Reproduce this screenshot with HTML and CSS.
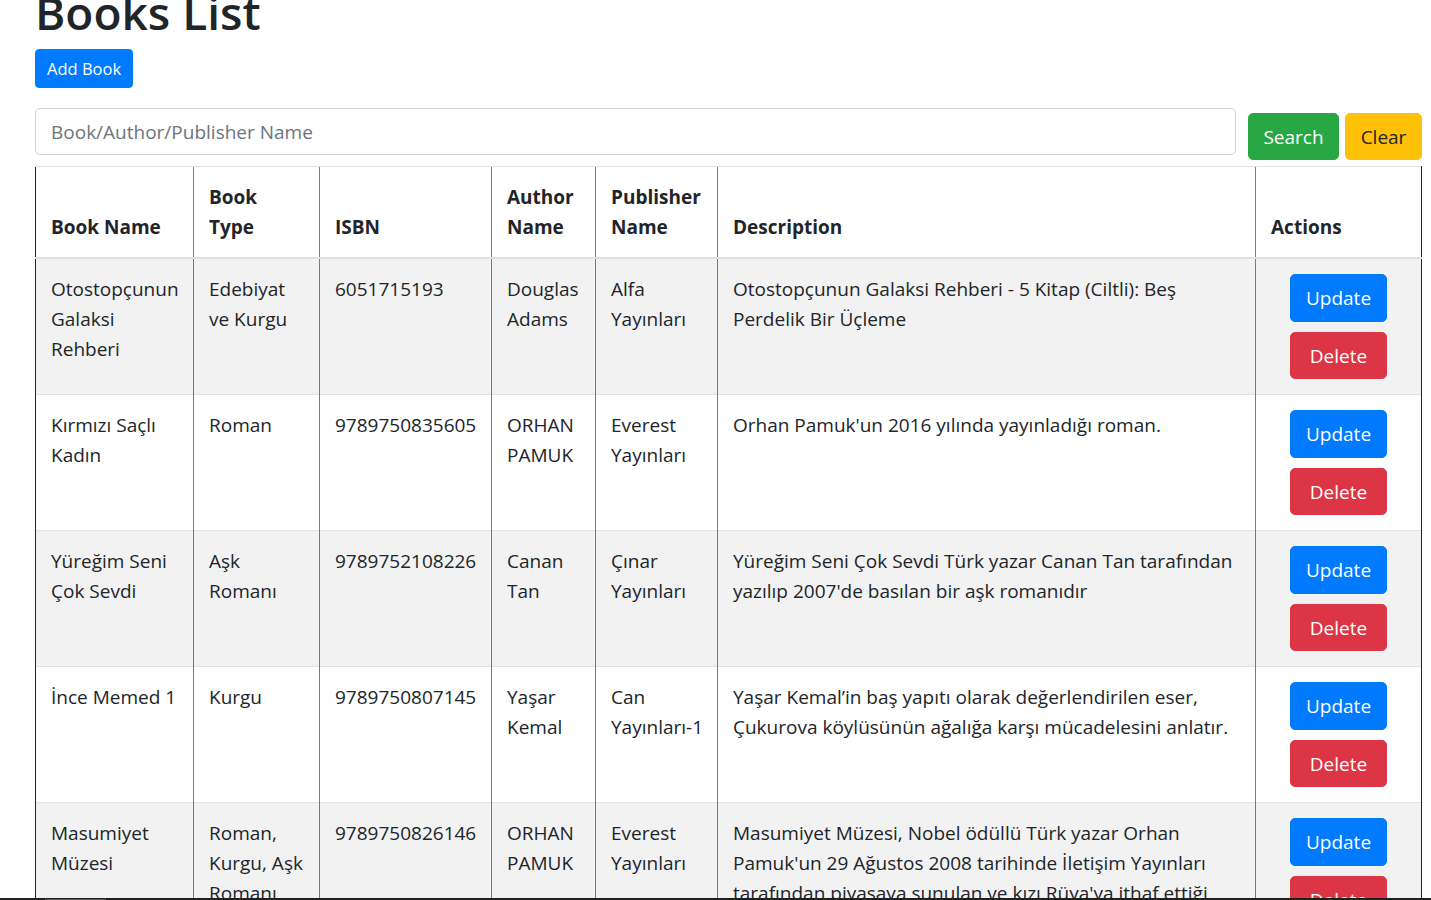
FILE: index.html
```html
<!DOCTYPE html>
<html lang="tr">
<head>
<meta charset="utf-8">
<title>Books List</title>
<link rel="stylesheet" href="styles.css">
</head>
<body>
<div class="page">
  <h1 class="title">Books List</h1>
  <div class="add-row">
    <button class="btn btn-sm btn-primary">Add Book</button>
  </div>
  <div class="search-row">
    <input class="search-input" type="text" placeholder="Book/Author/Publisher Name">
    <button class="btn btn-success btn-search">Search</button>
    <button class="btn btn-warning btn-clear">Clear</button>
  </div>
  <table class="books">
    <colgroup>
      <col class="c-name">
      <col class="c-type">
      <col class="c-isbn">
      <col class="c-author">
      <col class="c-pub">
      <col class="c-desc">
      <col class="c-act">
    </colgroup>
    <thead>
      <tr>
        <th>Book Name</th>
        <th>Book Type</th>
        <th>ISBN</th>
        <th>Author Name</th>
        <th>Publisher Name</th>
        <th>Description</th>
        <th>Actions</th>
      </tr>
    </thead>
    <tbody>
      <tr>
        <td>Otostopçunun Galaksi Rehberi</td>
        <td>Edebiyat ve Kurgu</td>
        <td>6051715193</td>
        <td>Douglas Adams</td>
        <td>Alfa Yayınları</td>
        <td>Otostopçunun Galaksi Rehberi - 5 Kitap (Ciltli): Beş Perdelik Bir Üçleme</td>
        <td class="actions"><button class="btn btn-primary btn-act btn-update">Update</button><button class="btn btn-danger btn-act">Delete</button></td>
      </tr>
      <tr>
        <td>Kırmızı Saçlı Kadın</td>
        <td>Roman</td>
        <td>9789750835605</td>
        <td>ORHAN PAMUK</td>
        <td>Everest Yayınları</td>
        <td>Orhan Pamuk'un 2016 yılında yayınladığı roman.</td>
        <td class="actions"><button class="btn btn-primary btn-act btn-update">Update</button><button class="btn btn-danger btn-act">Delete</button></td>
      </tr>
      <tr>
        <td>Yüreğim Seni Çok Sevdi</td>
        <td>Aşk Romanı</td>
        <td>9789752108226</td>
        <td>Canan Tan</td>
        <td>Çınar Yayınları</td>
        <td>Yüreğim Seni Çok Sevdi Türk yazar Canan Tan tarafından yazılıp 2007'de basılan bir aşk romanıdır</td>
        <td class="actions"><button class="btn btn-primary btn-act btn-update">Update</button><button class="btn btn-danger btn-act">Delete</button></td>
      </tr>
      <tr>
        <td>İnce Memed 1</td>
        <td>Kurgu</td>
        <td>9789750807145</td>
        <td>Yaşar Kemal</td>
        <td>Can Yayınları-1</td>
        <td>Yaşar Kemal’in baş yapıtı olarak değerlendirilen eser, Çukurova köylüsünün ağalığa karşı mücadelesini anlatır.</td>
        <td class="actions"><button class="btn btn-primary btn-act btn-update">Update</button><button class="btn btn-danger btn-act">Delete</button></td>
      </tr>
      <tr>
        <td>Masumiyet Müzesi</td>
        <td>Roman, Kurgu, Aşk Romanı</td>
        <td>9789750826146</td>
        <td>ORHAN PAMUK</td>
        <td>Everest Yayınları</td>
        <td>Masumiyet Müzesi, Nobel ödüllü Türk yazar Orhan Pamuk'un 29 Ağustos 2008 tarihinde İletişim Yayınları tarafından piyasaya sunulan ve kızı Rüya'ya ithaf ettiği romanıdır.</td>
        <td class="actions"><button class="btn btn-primary btn-act btn-update">Update</button><button class="btn btn-danger btn-act">Delete</button></td>
      </tr>
    </tbody>
  </table>
</div>
<div class="hscroll"><div class="hscroll-thumb"></div></div>
</body>
</html>
```

FILE: styles.css
```css
* {
  box-sizing: border-box;
}

html, body {
  margin: 0;
  padding: 0;
  background: #fff;
}

body {
  font-family: "Open Sans", "Noto Sans", sans-serif;
  font-size: 19px;
  line-height: 30px;
  color: #212529;
}

.page {
  padding: 0 9px 40px 35px;
}

.title {
  margin: -18px 0 7px 0;
  font-size: 46px;
  line-height: 60px;
  font-weight: 600;
  color: #212529;
}

.add-row {
  margin-bottom: 20px;
  height: 39px;
}

.btn {
  display: inline-flex;
  align-items: center;
  justify-content: center;
  font-family: "Open Sans", "Noto Sans", sans-serif;
  font-size: 19px;
  line-height: 30px;
  height: 47px;
  padding: 0 15px;
  border: 1px solid transparent;
  border-radius: 5px;
  color: #fff;
  cursor: pointer;
}

.btn-sm {
  height: 39px;
  font-size: 16.5px;
  line-height: 26px;
  padding: 0 11px;
  border-radius: 4px;
}

.btn-primary {
  background: #007bff;
  border-color: #007bff;
}

.btn-success {
  background: #28a745;
  border-color: #28a745;
}

.btn-warning {
  background: #ffc107;
  border-color: #ffc107;
  color: #212529;
}

.btn-danger {
  background: #dc3545;
  border-color: #dc3545;
}

.search-row {
  display: flex;
  align-items: flex-start;
  height: 52px;
}

.search-input {
  flex: 0 0 1201px;
  height: 47px;
  padding: 0 15px;
  border: 1px solid #ced4da;
  border-radius: 5px;
  font-family: "Open Sans", "Noto Sans", sans-serif;
  font-size: 19px;
  color: #495057;
  background: #fff;
  outline: none;
}

.search-input::placeholder {
  color: #6c757d;
}

.btn-search {
  width: 91px;
  margin-left: 12px;
  margin-top: 5px;
}

.btn-clear {
  width: 77px;
  margin-left: 6px;
  margin-top: 5px;
}

.books {
  margin-top: 6px;
  width: 1386px;
  table-layout: fixed;
  border-collapse: collapse;
}

.c-name { width: 158px; }
.c-type { width: 126px; }
.c-isbn { width: 172px; }
.c-author { width: 104px; }
.c-pub { width: 122px; }
.c-desc { width: 538px; }
.c-act { width: 166px; }

.books th,
.books td {
  padding: 15px;
  border-top: 1px solid #dee2e6;
  border-left: 1px solid #7a7a7a;
  text-align: left;
  overflow-wrap: normal;
}

.books th {
  vertical-align: bottom;
  font-weight: 700;
  border-bottom: 2px solid #dee2e6;
}

.books td {
  vertical-align: top;
}

.books th:first-child,
.books td:first-child {
  border-left: 1px solid #212529;
}

.books th:last-child,
.books td:last-child {
  border-right: 1px solid #212529;
}

.books tbody tr:nth-child(odd) td {
  background: #f2f2f2;
}

.books td.actions {
  text-align: center;
  padding-bottom: 15px;
}

.btn-act {
  display: flex;
  width: 97px;
  margin: 0 auto;
}

.btn-update {
  height: 48px;
}

.btn-act + .btn-act {
  margin-top: 10px;
}

.hscroll {
  position: fixed;
  left: 0;
  right: 0;
  bottom: 0;
  height: 2px;
  background: #1f1f1f;
}

.hscroll-thumb {
  position: absolute;
  left: 45px;
  width: 61px;
  top: 1px;
  height: 1px;
  background: #5a5a5a;
}
```
